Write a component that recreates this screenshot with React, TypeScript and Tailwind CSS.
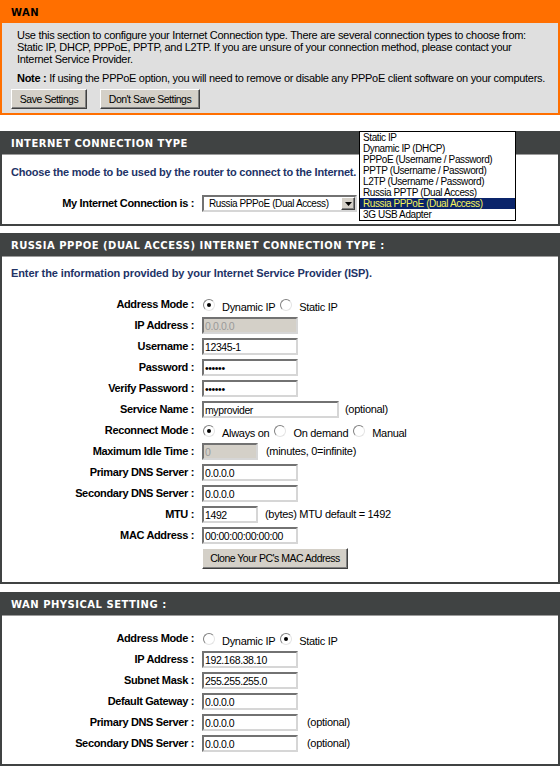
import React from 'react';

const fieldBorder =
  'border-2 border-t-[#727272] border-l-[#727272] border-b-[#d6d6d6] border-r-[#d6d6d6]';

const raised =
  'bg-[#d4d0c8] border border-t-white border-l-white border-b-[#404040] border-r-[#404040] shadow-[inset_-1px_-1px_0_#808080]';

const Btn = ({ children, className = '' }: { children: React.ReactNode; className?: string }) => (
  <button className={`${raised} text-[10.5px] leading-[13px] text-black px-0 whitespace-nowrap tracking-[-0.5px] ${className}`}>
    {children}
  </button>
);

interface FieldProps {
  value: string;
  w?: string;
  disabled?: boolean;
  password?: boolean;
}

const Field = ({ value, w = 'w-[96px]', disabled, password }: FieldProps) => (
  <input
    readOnly
    type={password ? 'password' : 'text'}
    value={value}
    className={`${w} h-[17px] px-[1px] py-0 text-[10.5px] leading-[13px] tracking-[-0.4px] outline-none ${fieldBorder} ${
      disabled ? 'bg-[#d4d0c8] text-[#9a9a9a]' : 'bg-white text-black'
    }`}
  />
);

const Radio = ({ checked }: { checked?: boolean }) => (
  <span className="w-[12px] h-[12px] shrink-0 rounded-full bg-white border border-t-[#808080] border-l-[#808080] border-b-[#e4e4e4] border-r-[#e4e4e4] flex items-center justify-center">
    {checked && <span className="w-[4px] h-[4px] rounded-full bg-black" />}
  </span>
);

const RadioOpt = ({ checked, label }: { checked?: boolean; label: string }) => (
  <span className="flex items-center gap-[7px]">
    <Radio checked={checked} />
    <span className="pt-[6px] whitespace-nowrap">{label}</span>
  </span>
);

const Row = ({ label, children }: { label: string; children: React.ReactNode }) => (
  <div className="flex items-center h-[21px]">
    <div className="w-[192px] text-right font-bold tracking-[-0.35px] whitespace-nowrap">{label} :</div>
    <div className="ml-[8px] flex items-center">{children}</div>
  </div>
);

const Note = ({ children, ml = 'ml-[8px]' }: { children: React.ReactNode; ml?: string }) => (
  <span className={`${ml} whitespace-nowrap`}>{children}</span>
);

const Box = ({ title, children, className = '' }: { title: string; children: React.ReactNode; className?: string }) => (
  <div className={`border-2 border-[#404343] bg-white ${className}`}>
    <div className="h-[22px] bg-[#404343] border-b border-[#9c9c9c] pl-[9px] flex items-center text-white font-bold text-[10px] tracking-[0.5px] font-['DejaVu_Sans',Verdana,sans-serif] whitespace-nowrap">
      {title}
    </div>
    {children}
  </div>
);

const options = [
  'Static IP',
  'Dynamic IP (DHCP)',
  'PPPoE (Username / Password)',
  'PPTP (Username / Password)',
  'L2TP (Username / Password)',
  'Russia PPTP (Dual Access)',
  'Russia PPPoE (Dual Access)',
  '3G USB Adapter',
];

export default function App() {
  return (
    <div className="relative w-[560px] bg-white text-black text-[11px] leading-[13px] tracking-[-0.3px] font-['Liberation_Sans',Arial,sans-serif]">
      {/* WAN intro */}
      <div className="border-2 border-[#ff6f00] bg-[#dfdfdf]">
        <div className="h-[21px] bg-[#ff6f00] pl-[9px] flex items-center font-['DejaVu_Sans',Verdana,sans-serif] font-bold text-[10px] tracking-[0.5px] text-black">
          WAN
        </div>
        <div className="px-[9px] pt-[6px] pb-[4px]">
          <p className="px-[6px] leading-[12px] whitespace-nowrap">
            Use this section to configure your Internet Connection type. There are several connection types to choose from:
            <br />
            Static IP, DHCP, PPPoE, PPTP, and L2TP. If you are unsure of your connection method, please contact your
            <br />
            Internet Service Provider.
          </p>
          <p className="px-[6px] mt-[7px] leading-[12px] whitespace-nowrap">
            <b>Note :</b> If using the PPPoE option, you will need to remove or disable any PPPoE client software on your computers.
          </p>
          <div className="mt-[5px] flex gap-[13px]">
            <Btn className="w-[76px] h-[20px]">Save Settings</Btn>
            <Btn className="w-[100px] h-[20px]">Don't Save Settings</Btn>
          </div>
        </div>
      </div>

      {/* Connection type */}
      <Box title="INTERNET CONNECTION TYPE" className="mt-[16px]">
        <div className="pt-[10px] pb-[12px]">
          <p className="pl-[9px] font-bold text-[#223366] leading-[14px] tracking-[-0.2px]">
            Choose the mode to be used by the router to connect to the Internet.
          </p>
          <div className="mt-[16px] flex items-center h-[17px]">
            <div className="w-[192px] text-right font-bold tracking-[-0.35px]">My Internet Connection is :</div>
            <div className={`ml-[8px] w-[155px] h-[17px] bg-white flex items-center justify-between overflow-hidden ${fieldBorder}`}>
              <span className="pl-[5px] whitespace-nowrap text-[10px] tracking-[-0.4px]">Russia PPPoE (Dual Access)</span>
              <span className={`w-[14px] h-[13px] shrink-0 flex items-center justify-center ${raised}`}>
                <svg width="7" height="4" viewBox="0 0 7 4">
                  <path d="M0 0h7L3.5 4z" fill="#000" />
                </svg>
              </span>
            </div>
          </div>
        </div>
      </Box>

      {/* PPPoE settings */}
      <Box title="RUSSIA PPPOE (DUAL ACCESS) INTERNET CONNECTION TYPE :" className="mt-[7px]">
        <div className="pt-[9px] pb-[13px]">
          <p className="pl-[9px] font-bold text-[#223366] leading-[14px] tracking-[-0.1px]">
            Enter the information provided by your Internet Service Provider (ISP).
          </p>
          <div className="mt-[14px]">
            <Row label="Address Mode">
              <span className="ml-[1px] flex items-center gap-[5px]">
                <RadioOpt checked label="Dynamic IP" />
                <RadioOpt label="Static IP" />
              </span>
            </Row>
            <Row label="IP Address">
              <Field value="0.0.0.0" disabled />
            </Row>
            <Row label="Username">
              <Field value="12345-1" />
            </Row>
            <Row label="Password">
              <Field value="abcdef" password />
            </Row>
            <Row label="Verify Password">
              <Field value="abcdef" password />
            </Row>
            <Row label="Service Name">
              <Field value="myprovider" w="w-[137px]" />
              <Note ml="ml-[6px]">(optional)</Note>
            </Row>
            <Row label="Reconnect Mode">
              <span className="ml-[1px] flex items-center gap-[5px]">
                <RadioOpt checked label="Always on" />
                <RadioOpt label="On demand" />
                <RadioOpt label="Manual" />
              </span>
            </Row>
            <Row label="Maximum Idle Time">
              <Field value="0" w="w-[56px]" disabled />
              <Note>(minutes, 0=infinite)</Note>
            </Row>
            <Row label="Primary DNS Server">
              <Field value="0.0.0.0" />
            </Row>
            <Row label="Secondary DNS Server">
              <Field value="0.0.0.0" />
            </Row>
            <Row label="MTU">
              <Field value="1492" w="w-[56px]" />
              <Note ml="ml-[7px]">(bytes) MTU default = 1492</Note>
            </Row>
            <Row label="MAC Address">
              <Field value="00:00:00:00:00:00" />
            </Row>
            <div className="pl-[200px] mt-[2px]">
              <Btn className="w-[146px] h-[21px]">Clone Your PC's MAC Address</Btn>
            </div>
          </div>
        </div>
      </Box>

      {/* WAN physical */}
      <Box title="WAN PHYSICAL SETTING :" className="mt-[8px]">
        <div className="pt-[12px] pb-[10px]">
          <Row label="Address Mode">
            <span className="ml-[1px] flex items-center gap-[5px]">
              <RadioOpt label="Dynamic IP" />
              <RadioOpt checked label="Static IP" />
            </span>
          </Row>
          <Row label="IP Address">
            <Field value="192.168.38.10" />
          </Row>
          <Row label="Subnet Mask">
            <Field value="255.255.255.0" />
          </Row>
          <Row label="Default Gateway">
            <Field value="0.0.0.0" />
          </Row>
          <Row label="Primary DNS Server">
            <Field value="0.0.0.0" />
            <Note ml="ml-[9px]">(optional)</Note>
          </Row>
          <Row label="Secondary DNS Server">
            <Field value="0.0.0.0" />
            <Note ml="ml-[9px]">(optional)</Note>
          </Row>
        </div>
      </Box>

      {/* open connection-type list */}
      <ul className="absolute left-[359px] top-[131px] w-[157px] border border-black bg-white text-[10px] tracking-[-0.4px]">
        {options.map((o) => (
          <li
            key={o}
            className={`h-[11px] leading-[11px] pl-[3px] whitespace-nowrap ${
              o === 'Russia PPPoE (Dual Access)' ? 'bg-[#0a246a] text-[#f2f25a]' : 'text-black'
            }`}
          >
            {o}
          </li>
        ))}
      </ul>
    </div>
  );
}
